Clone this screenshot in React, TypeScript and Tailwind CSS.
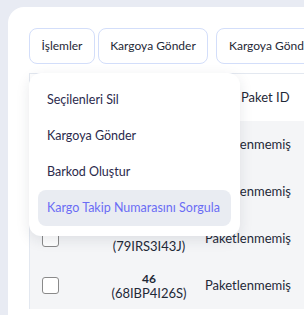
import React from "react";

const rows = [
    { no: "48", code: "(52KTR8I19M)", status: "Paketlenmemiş" },
    { no: "47", code: "(31PLA6I77C)", status: "Paketlenmemiş" },
    { no: "47", code: "(79IRS3I43J)", status: "Paketlenmemiş" },
    { no: "46", code: "(68IBP4I26S)", status: "Paketlenmemiş" },
];

const menuItems = ["Seçilenleri Sil", "Kargoya Gönder", "Barkod Oluştur", "Kargo Takip Numarasını Sorgula"];

const App = () => {
    return (
        <div
            className="h-[315px] w-[304px] overflow-hidden bg-[#e8ebf3] pl-2 pt-[7px]"
            style={{ fontFamily: "Lato, 'Open Sans', sans-serif" }}
        >
            <div className="h-full w-[320px] rounded-tl-2xl bg-white pl-[21px] pt-[21px]">
                {/* Action buttons */}
                <div className="relative flex items-center">
                    <button className="h-9 w-[66px] rounded-lg border border-[#d3defa] bg-white text-[12px] text-[#1f2937]">
                        İşlemler
                    </button>
                    <button className="ml-[3px] h-9 w-[110px] whitespace-nowrap rounded-lg border border-[#d3defa] bg-white text-[12px] text-[#1f2937]">
                        Kargoya Gönder
                    </button>
                    <button className="ml-2 h-9 whitespace-nowrap rounded-lg border border-[#d3defa] bg-white px-3 text-[12px] text-[#1f2937]">
                        Kargoya Gönder
                    </button>

                    {/* Dropdown menu */}
                    <div className="absolute left-0 top-[45px] z-10 w-[211px] rounded-xl bg-white px-[9px] pb-[10px] pt-[9px] shadow-[0_4px_14px_rgba(30,41,59,0.10)]">
                        {menuItems.map((item, i) => (
                            <div
                                key={item}
                                className={
                                    i === 3
                                        ? "flex h-9 items-center whitespace-nowrap rounded-lg bg-[#e9ecf2] px-[9px] text-[12.5px] text-[#6b6cf5]"
                                        : "flex h-9 items-center whitespace-nowrap px-[9px] text-[12.5px] text-[#2b2a4c]"
                                }
                            >
                                {item}
                            </div>
                        ))}
                    </div>
                </div>

                {/* Table */}
                <div className="mt-[9px] border-l border-t border-[#e3e8f0]">
                    <div className="flex h-[47px] items-center bg-white text-[13px] text-[#1f2937]">
                        <div className="w-[63px]" />
                        <div className="w-[112px] text-center">Sipariş No</div>
                        <div className="pl-[36px] whitespace-nowrap">Paket ID</div>
                    </div>
                    {rows.map((row, i) => (
                        <div key={i} className="flex h-[47px] items-center bg-[#f4f5f7] text-[13px] text-[#1f2937]">
                            <div className="w-[63px] pl-3">
                                <div className="h-[17px] w-[17px] rounded-[3px] border border-[#8a8a8a] bg-white" />
                            </div>
                            <div className="flex w-[112px] flex-col items-center leading-[14px]">
                                <span className="text-[12px] font-bold">{row.no}</span>
                                <span>{row.code}</span>
                            </div>
                            <div className="whitespace-nowrap">{row.status}</div>
                        </div>
                    ))}
                </div>
            </div>
        </div>
    );
};

export default App;
